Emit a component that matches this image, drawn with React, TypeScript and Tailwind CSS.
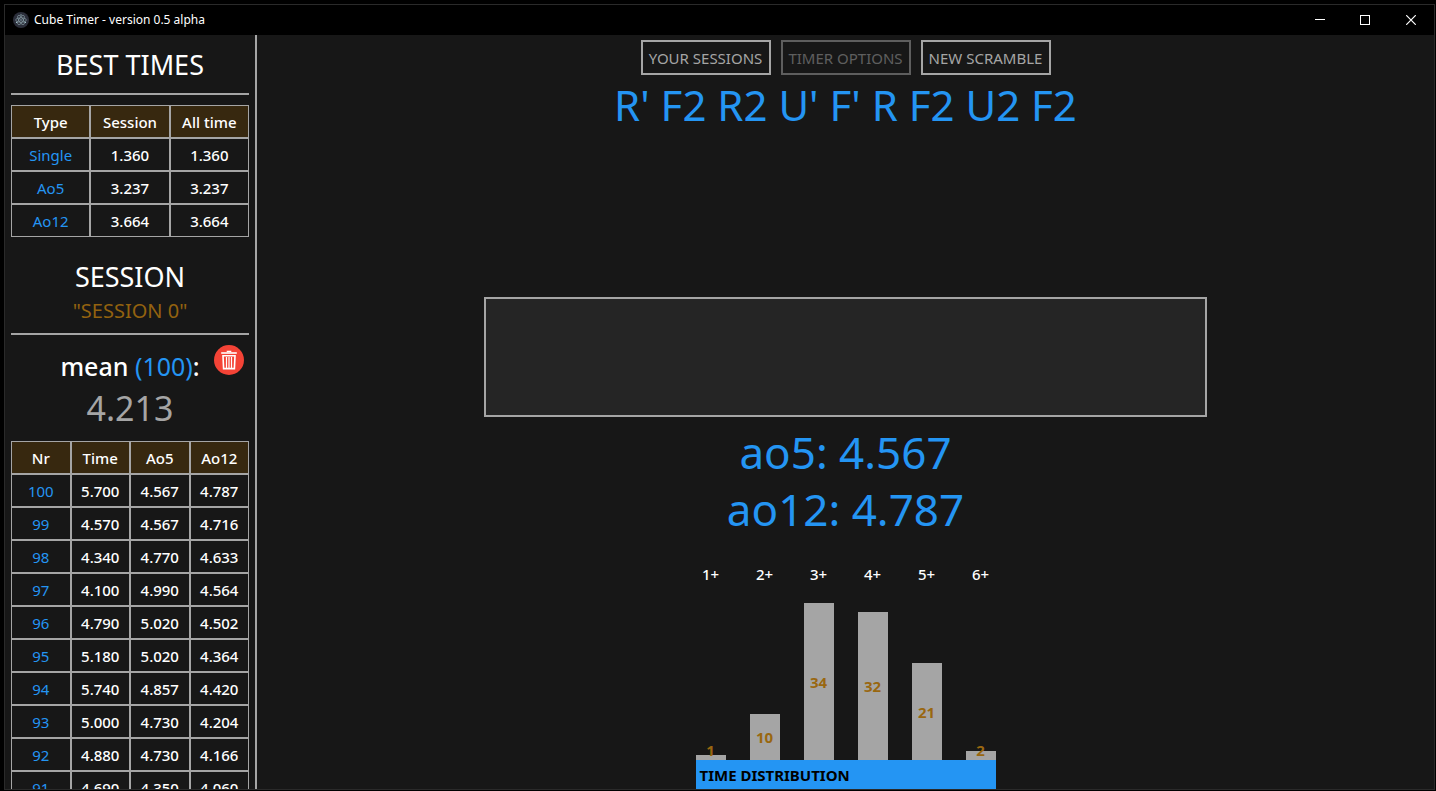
import React from "react";

const bestTimes = [
  ["Single", "1.360", "1.360"],
  ["Ao5", "3.237", "3.237"],
  ["Ao12", "3.664", "3.664"],
];

const solves = [
  ["100", "5.700", "4.567", "4.787"],
  ["99", "4.570", "4.567", "4.716"],
  ["98", "4.340", "4.770", "4.633"],
  ["97", "4.100", "4.990", "4.564"],
  ["96", "4.790", "5.020", "4.502"],
  ["95", "5.180", "5.020", "4.364"],
  ["94", "5.740", "4.857", "4.420"],
  ["93", "5.000", "4.730", "4.204"],
  ["92", "4.880", "4.730", "4.166"],
  ["91", "4.690", "4.350", "4.060"],
];

const distribution = [
  { label: "1+", count: 1 },
  { label: "2+", count: 10 },
  { label: "3+", count: 34 },
  { label: "4+", count: 32 },
  { label: "5+", count: 21 },
  { label: "6+", count: 2 },
];

const BAR_SCALE = 4.62;

function AppIcon() {
  return (
    <svg className="size-4 shrink-0" viewBox="0 0 16 16" aria-hidden="true">
      <circle cx="8" cy="8" r="8" fill="#2b2e3a" />
      <g fill="none" stroke="#9fb8c0" strokeOpacity="0.75" strokeWidth="0.7">
        <ellipse cx="8" cy="8" rx="5.3" ry="2.1" />
        <ellipse cx="8" cy="8" rx="5.3" ry="2.1" transform="rotate(60 8 8)" />
        <ellipse cx="8" cy="8" rx="5.3" ry="2.1" transform="rotate(120 8 8)" />
      </g>
      <g fill="#a9ccd4">
        <circle cx="8" cy="8" r="0.7" />
        <circle cx="3.6" cy="10.4" r="0.6" />
        <circle cx="12.4" cy="10.4" r="0.6" />
        <circle cx="8" cy="2.8" r="0.6" />
      </g>
    </svg>
  );
}

function TrashIcon() {
  return (
    <svg className="size-[30px]" viewBox="0 0 30 30" aria-hidden="true">
      <circle cx="15" cy="15" r="15" fill="#f44336" />
      <g fill="none" stroke="#fff">
        <path d="M7.2 8H22.8" strokeWidth="1.6" />
        <path d="M13.4 7.2V6.4H16.6V7.2" strokeWidth="1.4" />
        <path d="M9 10.8H21L20.4 23.6H9.6Z" strokeWidth="1.6" />
        <path d="M12.5 12V23M15 12V23M17.5 12V23" strokeWidth="1.2" />
      </g>
    </svg>
  );
}

function TimesTable({ heads, rows }: { heads: string[]; rows: string[][] }) {
  return (
    <table className="w-full table-fixed border-separate border-spacing-0 text-center text-[15px] leading-5">
      <thead>
        <tr>
          {heads.map((h) => (
            <th key={h} className="h-[33px] border border-[#a5a5a5] bg-[#37280f] p-0 font-medium">
              {h}
            </th>
          ))}
        </tr>
      </thead>
      <tbody>
        {rows.map(([first, ...rest]) => (
          <tr key={first}>
            <td className="h-[33px] border border-[#a5a5a5] p-0 text-[#2495f3]">{first}</td>
            {rest.map((v, i) => (
              <td key={i} className="h-[33px] border border-[#a5a5a5] p-0 font-medium">
                {v}
              </td>
            ))}
          </tr>
        ))}
      </tbody>
    </table>
  );
}

function TitleBar() {
  return (
    <header className="flex h-[30px] shrink-0 items-center bg-black pl-2">
      <AppIcon />
      <span className="ml-[5px] grow text-[12px] leading-4">Cube Timer - version 0.5 alpha</span>
      <button aria-label="Minimize" className="flex h-full w-[45px] items-center justify-center">
        <svg className="size-[10px]" viewBox="0 0 10 10" stroke="#fff" fill="none">
          <path d="M0 4.5H10" />
        </svg>
      </button>
      <button aria-label="Maximize" className="flex h-full w-[46px] items-center justify-center">
        <svg className="size-[10px]" viewBox="0 0 10 10" stroke="#fff" fill="none">
          <rect x="0.5" y="0.5" width="9" height="9" />
        </svg>
      </button>
      <button aria-label="Close" className="flex h-full w-[46px] items-center justify-center">
        <svg className="size-[10px]" viewBox="0 0 10 10" stroke="#fff" fill="none">
          <path d="M0.2 0.2L9.8 9.8M9.8 0.2L0.2 9.8" strokeWidth="1.2" />
        </svg>
      </button>
    </header>
  );
}

function Sidebar() {
  return (
    <aside className="w-[252px] shrink-0 overflow-hidden border-r-2 border-[#a5a5a5] px-[6px] text-center">
      <h2 className="mb-[10px] border-b-2 border-[#a5a5a5] pt-[10px] pb-2 text-[27px] leading-10">
        BEST TIMES
      </h2>
      <TimesTable heads={["Type", "Session", "All time"]} rows={bestTimes} />
      <div className="mt-5 border-b-2 border-[#a5a5a5] pb-2">
        <h2 className="text-[27px] leading-10">SESSION</h2>
        <p className="text-[20px] leading-7 text-[#93620f]">"SESSION 0"</p>
      </div>
      <div className="relative pt-[11px]">
        <p className="text-[25px] leading-10 font-medium">
          mean <span className="font-normal text-[#2495f3]">(100)</span>:
        </p>
        <button aria-label="Delete session times" className="absolute top-[10px] right-[5px]">
          <TrashIcon />
        </button>
        <p className="pb-[10px] text-[34px] leading-[45px] text-[#a5a5a5]">4.213</p>
      </div>
      <TimesTable heads={["Nr", "Time", "Ao5", "Ao12"]} rows={solves} />
    </aside>
  );
}

function Distribution() {
  return (
    <section className="w-[300px]">
      <div className="flex justify-between text-center text-[15px] leading-5 font-medium">
        {distribution.map((d) => (
          <span key={d.label} className="w-[30px]">
            {d.label}
          </span>
        ))}
      </div>
      <div className="flex h-[176px] items-end justify-between">
        {distribution.map((d) => {
          const height = Math.round(d.count * BAR_SCALE);
          return (
            <div
              key={d.label}
              className={`flex w-[30px] justify-center bg-[#a5a5a5] text-[15px] leading-5 font-bold text-[#996710] ${
                height < 20 ? "items-end" : "items-center"
              }`}
              style={{ height }}
            >
              <span>{d.count}</span>
            </div>
          );
        })}
      </div>
      <h3 className="h-[29px] bg-[#2495f3] px-1 text-[15px] leading-[31px] font-bold text-black">
        TIME DISTRIBUTION
      </h3>
    </section>
  );
}

export default function App() {
  const toolButton =
    "h-[35px] w-[130px] border-2 border-[#a5a5a5] pt-px text-[15px] whitespace-nowrap text-[#a5a5a5]";
  return (
    <div className="h-screen bg-black pt-1 pb-px pl-1 pr-px font-['Noto_Sans','Open_Sans',sans-serif] text-white">
      <div className="flex h-full flex-col border border-[#2a2a2a] bg-[#171717]">
        <TitleBar />
        <div className="flex min-h-0 grow">
          <Sidebar />
          <main className="flex min-w-0 grow flex-col items-center overflow-hidden">
            <nav className="flex gap-[10px] pt-[5px]">
              <button className={toolButton}>YOUR SESSIONS</button>
              <button className={`${toolButton} opacity-50`} disabled>
                TIMER OPTIONS
              </button>
              <button className={toolButton}>NEW SCRAMBLE</button>
            </nav>
            <p className="text-[42px] leading-[60px] text-[#2495f3]">R' F2 R2 U' F' R F2 U2 F2</p>
            <div className="mt-auto h-[120px] w-[61.4%] shrink-0 border-2 border-[#a5a5a5] bg-[#252525]" />
            <div className="mt-[7px] mb-[26px] text-center text-[44px] leading-[57px] text-[#2495f3]">
              <p>ao5: 4.567</p>
              <p>ao12: 4.787</p>
            </div>
            <Distribution />
          </main>
        </div>
      </div>
    </div>
  );
}
